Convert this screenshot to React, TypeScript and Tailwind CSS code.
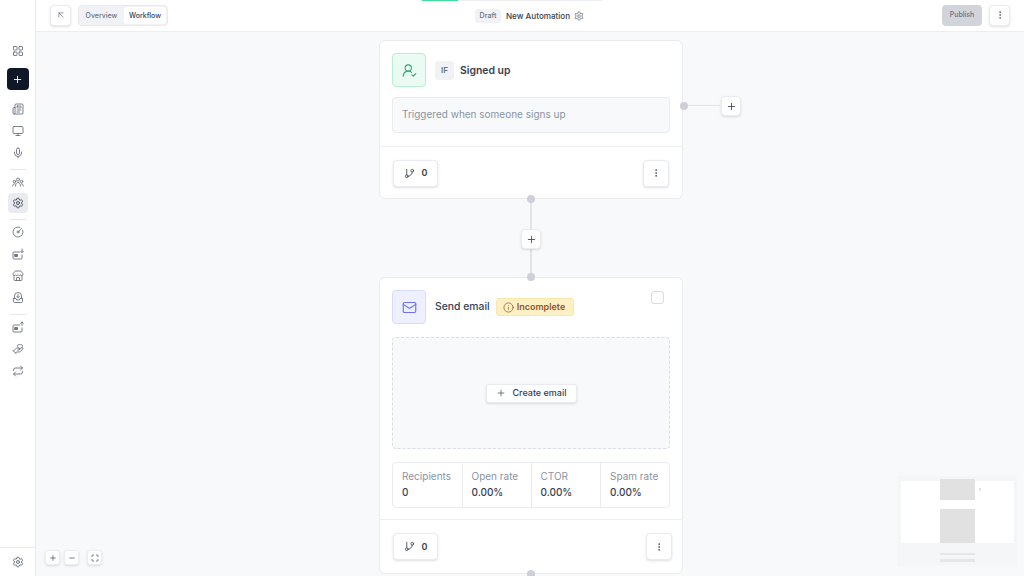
import React from 'react'
import {
  ArrowUpLeft,
  CircleGauge,
  GitBranch,
  HandHeart,
  Info,
  LayoutGrid,
  Mail,
  Maximize,
  Mic,
  Minus,
  Monitor,
  MoreVertical,
  Newspaper,
  Plus,
  Repeat,
  Settings,
  Store,
  UserRoundCheck,
} from 'lucide-react'

const font = "font-['Inter','Noto_Sans',sans-serif]"

type IconProps = { size?: number; strokeWidth?: number }

const GroupIcon: React.FC<IconProps> = ({ size = 12, strokeWidth = 1.8 }) => (
  <svg width={size} height={size} viewBox="0 0 24 24" fill="none" stroke="currentColor" strokeWidth={strokeWidth} strokeLinecap="round" strokeLinejoin="round">
    <circle cx="12" cy="7" r="3" />
    <circle cx="5" cy="11" r="2.5" />
    <circle cx="19" cy="11" r="2.5" />
    <path d="M7 20c0-4 2-7 5-7s5 3 5 7" />
    <path d="M1.5 20c0-2.5 1.2-4.5 3.5-4.5" />
    <path d="M22.5 20c0-2.5-1.200-4.500-3.500-4.500" />
  </svg>
)

const AdDownIcon: React.FC<IconProps> = ({ size = 12, strokeWidth = 1.8 }) => (
  <svg width={size} height={size} viewBox="0 0 24 24" fill="none" stroke="currentColor" strokeWidth={strokeWidth} strokeLinecap="round" strokeLinejoin="round">
    <path d="M15 8H4a2 2 0 0 0-2 2v10a2 2 0 0 0 2 2h14a2 2 0 0 0 2-2v-6" />
    <rect x="6" y="13" width="5" height="4" fill="currentColor" />
    <path d="M20 2v7M17.500 6.500 20 9l2.500-2.500" />
  </svg>
)

const AdUpIcon: React.FC<IconProps> = ({ size = 12, strokeWidth = 1.8 }) => (
  <svg width={size} height={size} viewBox="0 0 24 24" fill="none" stroke="currentColor" strokeWidth={strokeWidth} strokeLinecap="round" strokeLinejoin="round">
    <path d="M15 8H4a2 2 0 0 0-2 2v10a2 2 0 0 0 2 2h14a2 2 0 0 0 2-2v-6" />
    <rect x="6" y="13" width="5" height="4" fill="currentColor" />
    <path d="M20 9V2M17.500 4.500 20 2l2.500 2.500" />
  </svg>
)

const InboxDomeIcon: React.FC<IconProps> = ({ size = 12, strokeWidth = 1.8 }) => (
  <svg width={size} height={size} viewBox="0 0 24 24" fill="none" stroke="currentColor" strokeWidth={strokeWidth} strokeLinecap="round" strokeLinejoin="round">
    <path d="M5 13V8a7 7 0 0 1 14 0v5" />
    <path d="M3 13h5l1.500 3h5l1.500-3h5v6a2 2 0 0 1-2 2H5a2 2 0 0 1-2-2z" />
    <path d="M9.500 9 12 11.500 14.500 9M12 5v6" />
  </svg>
)

const NavIcon: React.FC<{ icon: React.ElementType; className?: string }> = ({ icon: Icon, className = 'mb-[2px]' }) => (
  <div className={`w-5 h-5 flex items-center justify-center text-[#6b7280] ${className}`}>
    <Icon size={12} strokeWidth={1.8} />
  </div>
)

const Divider: React.FC = () => <div className="w-4 h-px bg-[#e5e7eb] mt-[6px] mb-[2px]" />

const Sidebar: React.FC = () => (
  <aside className="w-9 h-full shrink-0 bg-white border-r border-[#e9ebef] flex flex-col items-center">
    <div className="flex-1 flex flex-col items-center pt-[41px]">
      <NavIcon icon={LayoutGrid} className="mb-[7px]" />
      <div className="w-[22px] h-[22px] rounded bg-[#101828] text-white flex items-center justify-center mb-[9px]">
        <Plus size={11} strokeWidth={2} />
      </div>
      <NavIcon icon={Newspaper} />
      <NavIcon icon={Monitor} />
      <NavIcon icon={Mic} className="mb-0" />
      <Divider />
      <NavIcon icon={GroupIcon} className="mb-[1px]" />
      <div className="w-5 h-5 rounded bg-[#e9ebef] text-[#4b5563] flex items-center justify-center">
        <Settings size={12} strokeWidth={2} />
      </div>
      <Divider />
      <NavIcon icon={CircleGauge} />
      <NavIcon icon={AdDownIcon} />
      <NavIcon icon={Store} />
      <NavIcon icon={InboxDomeIcon} className="mb-0" />
      <Divider />
      <NavIcon icon={AdUpIcon} />
      <NavIcon icon={HandHeart} />
      <NavIcon icon={Repeat} className="mb-0" />
    </div>
    <div className="w-full h-[29px] border-t border-[#e9ebef] flex items-center justify-center text-[#6b7280]">
      <Settings size={12} strokeWidth={2} />
    </div>
  </aside>
)

const Header: React.FC = () => (
  <header className="relative h-8 shrink-0 bg-white border-b border-[#eceef1] flex items-center justify-between pl-[14px] pr-[14px] pb-[1px]">
    <div className="flex items-center gap-[7px]">
      <button className="w-[21px] h-[21px] rounded bg-white border border-[#e9ebef] shadow-sm text-[#6b7280] flex items-center justify-center">
        <ArrowUpLeft size={10} strokeWidth={1.7} />
      </button>
      <div className="h-[21px] w-[90px] rounded bg-[#f1f2f5] border border-[#e9ebef] flex items-center pl-[1px] text-[7px] font-medium">
        <span className="w-[43px] leading-[17px] text-center text-[#6b7280]">Overview</span>
        <span className="ml-[1px] h-[17px] w-[42px] leading-[17px] rounded-[3px] bg-white text-center text-[#374151]">Workflow</span>
      </div>
    </div>
    <div className="absolute left-[386px] top-0 w-[180px] h-px bg-[#eceef1]">
      <div className="w-9 h-[1px] bg-[#3ddc97]" />
    </div>
    <div className="absolute left-[439px] top-[9px] flex items-center">
      <span className="h-[14px] w-[26px] rounded-[3px] bg-[#f1f2f5] text-[#6b7280] text-[7.200px] leading-[14px] font-medium text-center">Draft</span>
      <span className="ml-[5px] text-[8.100px] leading-[14px] font-medium text-[#374151]">New Automation</span>
      <Settings size={10} strokeWidth={3} className="ml-[4px] text-[#a3a9b3]" />
    </div>
    <div className="flex items-center gap-[7px]">
      <button className="w-10 h-[21px] rounded bg-[#d1d5db] text-[#6b7280] text-[7px] font-medium">Publish</button>
      <button className="w-[21px] h-[21px] rounded bg-white border border-[#e9ebef] shadow-sm text-[#4b5563] flex items-center justify-center">
        <MoreVertical size={10} strokeWidth={1.8} />
      </button>
    </div>
  </header>
)

const Dot: React.FC<{ className: string }> = ({ className }) => (
  <div className={`absolute w-2 h-2 rounded-full bg-[#cdd0d8] ${className}`} />
)

const BranchButton: React.FC = () => (
  <button className="w-[45px] h-[27px] rounded bg-white border border-[#e9ebef] shadow-sm flex items-center justify-center gap-[7px] text-[#374151]">
    <GitBranch size={11} strokeWidth={1.8} />
    <span className="text-[9px] font-semibold">0</span>
  </button>
)

const MoreButton: React.FC = () => (
  <button className="w-[26px] h-[27px] rounded bg-white border border-[#e9ebef] shadow-sm flex items-center justify-center text-[#374151]">
    <MoreVertical size={10} strokeWidth={1.8} />
  </button>
)

const TriggerCard: React.FC = () => (
  <div className="absolute left-[343px] top-2 w-[304px] h-[159px] rounded-md bg-white border border-[#e9ebef] flex flex-col">
    <div className="px-3 pt-3 flex-1 border-b border-[#eceef1]">
      <div className="flex items-center">
        <div className="w-[34px] h-[34px] rounded bg-[#eafbf3] border border-[#b5f0d3] text-[#2fa36f] flex items-center justify-center">
          <UserRoundCheck size={15} strokeWidth={1.7} />
        </div>
        <span className="ml-[9px] w-[19px] h-[19px] rounded-[3px] bg-[#f1f2f5] text-[#6b7280] text-[8px] leading-[19px] font-semibold text-center">IF</span>
        <span className="ml-[6px] mt-[1px] text-[10.400px] font-semibold text-[#374151]">Signed up</span>
      </div>
      <div className="mt-[10px] h-9 rounded bg-[#f8f9fb] border border-[#e9ebef] pl-[9px] text-[10px] leading-[33px] text-[#8b93a1]">
        Triggered when someone signs up
      </div>
    </div>
    <div className="h-[51px] pt-[1px] px-[13px] flex items-center justify-between">
      <BranchButton />
      <MoreButton />
    </div>
  </div>
)

const stats = [
  { label: 'Recipients', value: '0' },
  { label: 'Open rate', value: '0.00%' },
  { label: 'CTOR', value: '0.00%' },
  { label: 'Spam rate', value: '0.00%' },
]

const EmailCard: React.FC = () => (
  <div className="absolute left-[343px] top-[245px] w-[304px] h-[297px] rounded-md bg-white border border-[#e9ebef] flex flex-col">
    <div className="px-3 pt-3 flex-1 border-b border-[#eceef1] relative">
      <div className="flex items-center">
        <div className="w-[34px] h-[34px] rounded bg-[#eef0ff] border border-[#d6dcff] text-[#6f6ff0] flex items-center justify-center">
          <Mail size={15} strokeWidth={1.8} />
        </div>
        <span className="ml-[9px] text-[10.400px] font-medium text-[#374151]">Send email</span>
        <span className="ml-[6px] h-[18px] w-[78px] rounded-[3px] bg-[#fdf0c4] border border-[#fbe7a8] text-[#92562b] flex items-center pl-[6px] gap-[3px] text-[9px] font-semibold">
          <Info size={11} strokeWidth={1.6} />
          Incomplete
        </span>
      </div>
      <div className="absolute right-[18px] top-[13px] w-[13px] h-[13px] rounded-[3px] border border-[#d9dce3] bg-white" />
      <div className="mt-[13px] h-[112px] rounded bg-[#f8f9fb] border border-dashed border-[#d9dce3] flex items-center justify-center">
        <button className="w-[91px] h-[19px] rounded-[3px] bg-white border border-[#e9ebef] shadow-sm flex items-center justify-center gap-[7px] text-[9px] font-medium text-[#374151]">
          <Plus size={10} strokeWidth={1.6} />
          Create email
        </button>
      </div>
      <div className="mt-[13px] h-[46px] rounded bg-white border border-[#e9ebef] grid grid-cols-[68.500px_69px_69.500px_1fr]">
        {stats.map((stat, index) => (
          <div key={stat.label} className={`pl-[9px] pt-[6px] ${index > 0 ? 'border-l border-[#e9ebef]' : ''}`}>
            <div className="text-[10px] leading-[15px] text-[#8b93a1]">{stat.label}</div>
            <div className="text-[10px] leading-[16px] font-medium text-[#374151]">{stat.value}</div>
          </div>
        ))}
      </div>
    </div>
    <div className="h-[53px] pl-[13px] pr-[10px] flex items-center justify-between">
      <BranchButton />
      <MoreButton />
    </div>
  </div>
)

const Canvas: React.FC = () => (
  <div className="relative flex-1 bg-[#f8f9fb] overflow-hidden">
    <TriggerCard />
    <EmailCard />

    {/* connectors */}
    <div className="absolute left-[494px] top-[167px] w-[2px] h-[78px] bg-[#e2e4ea]" />
    <Dot className="left-[491px] top-[163px]" />
    <Dot className="left-[491px] top-[241px]" />
    <Dot className="left-[491px] top-[538px]" />
    <Dot className="left-[644px] top-[70px]" />
    <div className="absolute left-[652px] top-[73px] w-[32px] h-px bg-[#e2e4ea]" />
    <button className="absolute left-[485px] top-[197px] w-5 h-5 rounded bg-white border border-[#e9ebef] shadow-sm text-[#374151] flex items-center justify-center">
      <Plus size={11} strokeWidth={1.8} />
    </button>
    <button className="absolute left-[685px] top-[64px] w-5 h-5 rounded bg-white border border-[#e9ebef] shadow-sm text-[#374151] flex items-center justify-center">
      <Plus size={11} strokeWidth={1.8} />
    </button>

    {/* zoom controls */}
    <div className="absolute left-[9px] top-[518px] flex items-center">
      <button className="w-[15px] h-[15px] rounded-[3px] bg-white border border-[#eceef1] shadow-sm text-[#374151] flex items-center justify-center">
        <Plus size={8} strokeWidth={2} />
      </button>
      <button className="ml-1 w-[15px] h-[15px] rounded-[3px] bg-white border border-[#eceef1] shadow-sm text-[#374151] flex items-center justify-center">
        <Minus size={8} strokeWidth={2} />
      </button>
      <button className="ml-2 w-[15px] h-[15px] rounded-[3px] bg-white border border-[#eceef1] shadow-sm text-[#374151] flex items-center justify-center">
        <Maximize size={8} strokeWidth={2} />
      </button>
    </div>

    {/* minimap */}
    <div className="absolute left-[861px] top-[444px] w-[120px] h-[90px] bg-[#f5f6f7]">
      <div className="absolute left-[4px] top-[5px] w-[113px] h-[62px] bg-white" />
      <div className="absolute left-[43px] top-[3px] w-[35px] h-[21px] bg-[#e1e1e1]" />
      <div className="absolute left-[43px] top-[33px] w-[35px] h-[34px] bg-[#e1e1e1]" />
      <div className="absolute left-[82px] top-[12px] w-[2px] h-[3px] bg-[#e1e1e1]" />
      <div className="absolute left-[43px] top-[77px] w-[35px] h-[2px] bg-[#e6e6e6]" />
      <div className="absolute left-[43px] top-[83px] w-[35px] h-[3px] bg-[#e6e6e6]" />
    </div>
  </div>
)

export default function App() {
  return (
    <div className={`w-[1024px] h-[576px] overflow-hidden flex bg-white ${font}`}>
      <Sidebar />
      <main className="flex-1 flex flex-col min-w-0">
        <Header />
        <Canvas />
      </main>
    </div>
  )
}
